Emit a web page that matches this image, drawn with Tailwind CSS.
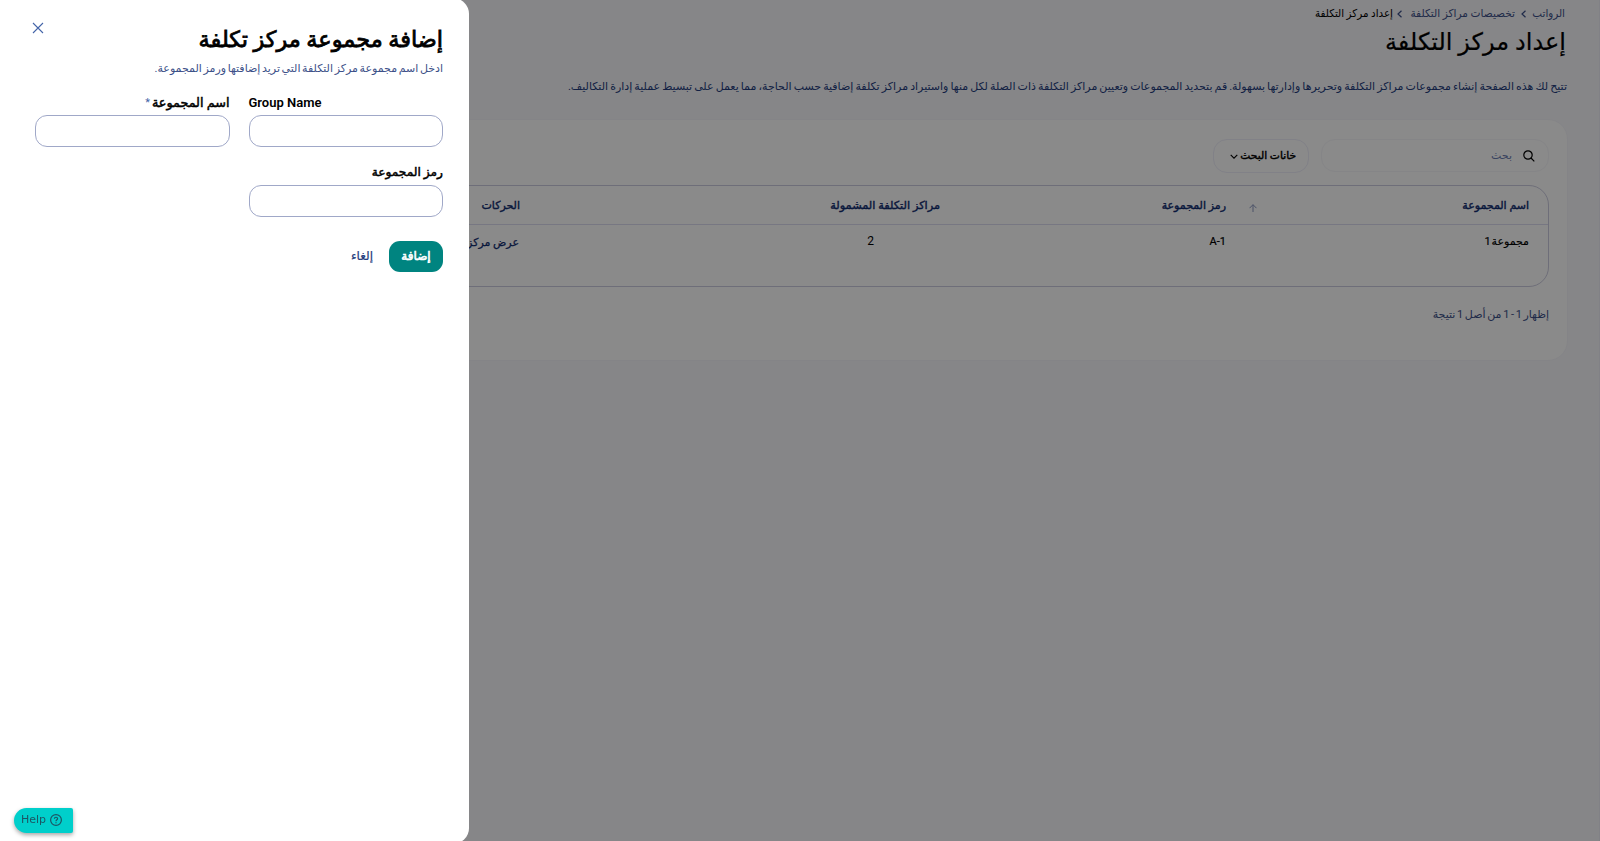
<!DOCTYPE html>
<html lang="ar" dir="rtl">
<head>
    <meta charset="UTF-8">
    <meta name="viewport" content="width=device-width, initial-scale=1.0">
    <title>إعداد مركز التكلفة</title>
    <script src="https://cdn.jsdelivr.net/npm/@tailwindcss/browser@4"></script>
</head>
<body class="h-[841px] overflow-hidden bg-[#f8f8fc] font-['Roboto','DejaVu_Sans',sans-serif] text-[11px] text-[#3c5088]">
    <!-- Page -->
    <div class="flex h-full flex-col border-r border-[#eeeef8] pr-[31px]">
        <nav class="flex h-7 items-center pr-[3px] whitespace-nowrap">
            <span class="w-[33px] origin-right scale-x-94">الرواتب</span>
            <svg class="mr-[6px] ml-[6px] h-2 w-[5px]" viewBox="0 0 5 8" fill="none" stroke="currentColor" stroke-width="1.2"><path d="M4.500 .7 1 4l3.500 3.300"/></svg>
            <span class="w-[105px] origin-right scale-x-96">تخصيصات مراكز التكلفة</span>
            <svg class="mr-2 ml-1 h-2 w-[5px]" viewBox="0 0 5 8" fill="none" stroke="currentColor" stroke-width="1.2"><path d="M4.500 .7 1 4l3.500 3.300"/></svg>
            <span class="w-20 origin-right scale-x-94 text-black">إعداد مركز التكلفة</span>
        </nav>
        <h1 class="flex h-7 items-center pr-[2px] text-[24px] whitespace-nowrap text-black [-webkit-text-stroke:0.2px]">إعداد مركز التكلفة</h1>
        <p class="mt-[21px] flex h-5 items-center pr-px text-[11px] [word-spacing:-0.65px] whitespace-nowrap text-[#243c7c]">تتيح لك هذه الصفحة إنشاء مجموعات مراكز التكلفة وتحريرها وإدارتها بسهولة. قم بتحديد المجموعات وتعيين مراكز التكلفة ذات الصلة لكل منها واستيراد مراكز تكلفة إضافية حسب الحاجة، مما يعمل على تبسيط عملية إدارة التكاليف.</p>

        <main class="mt-[22px] h-[242px] rounded-[20px] border border-[#f4f4fa] bg-white pt-[19px] pr-[18px]">
            <div class="flex gap-3">
                <div class="flex h-[33px] w-[228px] items-center gap-[11px] rounded-[14px] border border-[#f6f6fa] pr-[13px]">
                    <svg class="size-3" viewBox="0 0 12 12" fill="none" stroke="black" stroke-width="1.200"><circle cx="5" cy="5" r="4.200"/><path d="m8 8 3.300 3.300"/></svg>
                    <span class="mt-px text-[#6a7cb0]">بحث</span>
                </div>
                <button class="flex h-[34px] w-24 items-center gap-[2px] rounded-[14px] border border-[#eeeefa] pr-3 text-[10.7px] text-black [-webkit-text-stroke:0.4px]">
                    <span>خانات البحث</span>
                    <svg class="h-[5px] w-2" viewBox="0 0 8 5" fill="none" stroke="currentColor" stroke-width="1.100"><path d="m.7 .8 3.300 3.300L7.300 .8"/></svg>
                </button>
            </div>
            <div class="mt-3 h-[102px] rounded-r-[20px] border border-[#ccccdf]">
                <div class="grid h-[39px] grid-cols-[303px_286px_420px_1fr] items-center border-b border-[#dcdcf0] pt-[2px] pr-[19px] text-[#102c70] [-webkit-text-stroke:0.4px]">
                    <div class="flex items-center justify-between pl-[23px]">
                        <span>اسم المجموعة</span>
                        <svg class="mt-[3px] size-2" viewBox="0 0 8 8" fill="none" stroke="#8c98c0"><path d="M4 8V.7M.5 4.200 4 .7l3.500 3.500"/></svg>
                    </div>
                    <span>رمز المجموعة</span>
                    <span class="origin-right scale-x-103">مراكز التكلفة المشمولة</span>
                    <span>الحركات</span>
                </div>
                <div class="grid h-[34px] grid-cols-[303px_286px_420px_1fr] items-center pr-[19px] text-black">
                    <span class="[word-spacing:-2px] [-webkit-text-stroke:0.15px]">مجموعة 1</span>
                    <span class="text-[11px] [-webkit-text-stroke:0.2px]">A-1</span>
                    <span class="-mt-[3px] pr-[66px] text-[12px]">2</span>
                    <span class="mt-[2px] pr-px whitespace-nowrap text-[#102c70] [-webkit-text-stroke:0.25px]">عرض مركز التكلفة</span>
                </div>
            </div>
            <p class="mt-[18px] flex h-5 items-center [word-spacing:-1.1px]">إظهار 1 - 1 من أصل 1 نتيجة</p>
        </main>
    </div>

    <!-- Backdrop -->
    <div class="fixed inset-0 bg-black/46"></div>

    <!-- Drawer -->
    <aside class="fixed -top-[2px] -bottom-[3px] left-0 w-[469px] rounded-r-[16px] bg-white pr-[26px] pl-[35px]">
        <button class="absolute top-[24px] left-8">
            <svg class="size-3" viewBox="0 0 12 12" fill="none" stroke="#4464a8" stroke-width="1.100"><path d="m1 1 10 10M11 1 1 11"/></svg>
        </button>
        <h2 class="mt-[26px] flex h-8 items-center text-[22.4px] whitespace-nowrap text-black [-webkit-text-stroke:0.8px]">إضافة مجموعة مركز تكلفة</h2>
        <p class="mt-[3px] flex h-5 items-center [word-spacing:-1.1px] whitespace-nowrap">ادخل اسم مجموعة مركز التكلفة التي تريد إضافتها ورمز المجموعة.</p>
        <form class="mt-[14px] grid grid-cols-2 gap-x-[19px]">
            <label class="block h-[70px]">
                <span class="flex h-5 items-center text-[13px] font-semibold text-black" dir="ltr">Group Name</span>
                <input class="mt-[2px] block h-8 w-full rounded-[12px] border border-[#a0a8c8]">
            </label>
            <label class="block h-[70px]">
                <span class="flex h-5 items-center gap-[2px] text-[12.8px] text-black [-webkit-text-stroke:0.5px]">اسم المجموعة<b class="text-[11px] font-normal text-[#4464a8] [-webkit-text-stroke:0]">*</b></span>
                <input class="mt-[2px] block h-8 w-full rounded-[12px] border border-[#a0a8c8]">
            </label>
            <label class="block h-[70px]">
                <span class="flex h-[18px] items-center text-[12.2px] text-black [-webkit-text-stroke:0.5px]">رمز المجموعة</span>
                <input class="mt-1 block h-8 w-full rounded-[12px] border border-[#a0a8c8]">
            </label>
        </form>
        <div class="mt-2 flex items-center gap-4">
            <button class="h-[31px] w-[54px] rounded-[11px] bg-[#008480] pb-px text-[12px] text-white [-webkit-text-stroke:0.6px]">إضافة</button>
            <button class="pb-px text-[12px] text-[#243c7c] [-webkit-text-stroke:0.2px]">إلغاء</button>
        </div>
    </aside>

    <!-- Help launcher -->
    <button dir="ltr" class="fixed top-[808px] left-[14px] flex h-[25px] w-[59px] items-center gap-1 rounded-l-[13px] rounded-r-[2px] bg-[#00cfcb] pl-[7px] font-['DejaVu_Sans'] text-[11px] text-[#1c5664] shadow-[0_2px_4px_rgba(0,0,0,0.35)]">
        <span>Help</span>
        <svg class="-mt-px size-3" viewBox="0 0 12 12" fill="none" stroke="currentColor" stroke-width="1.200"><circle cx="6" cy="6" r="5.400"/><path d="M4.400 4.800c0-2.100 3.200-2 3.200-.1C7.600 5.900 6 5.800 6 7.300M6 8.300v1"/></svg>
    </button>
</body>
</html>
